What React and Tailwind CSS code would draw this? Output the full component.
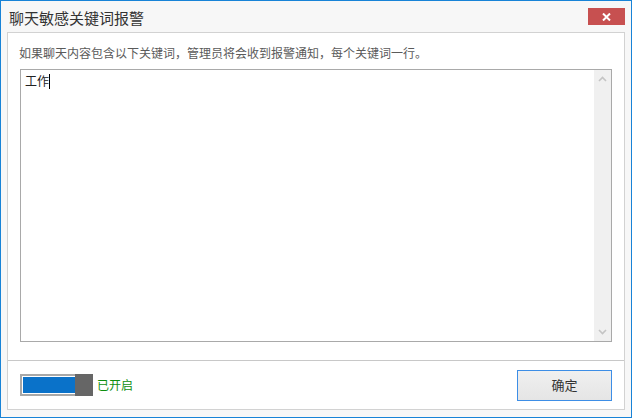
const font = { fontFamily: '"Microsoft YaHei", "Noto Sans CJK SC", sans-serif' };

function Chevron({ up }) {
  return (
    <svg width="9" height="6" viewBox="0 0 9 6" className="block">
      <path
        d={up ? 'M1 5 L4.5 1.5 L8 5' : 'M1 1 L4.5 4.5 L8 1'}
        fill="none"
        stroke="#c4c4c4"
        strokeWidth="1.6"
      />
    </svg>
  );
}

export default function App() {
  return (
    <div
      className="w-[632px] h-[418px] border border-[#1883d7] bg-[#f7f7f7] flex flex-col text-[#333]"
      style={font}
    >
      {/* title bar */}
      <div className="h-[31px] flex items-start justify-between pl-[8px] pr-[6px]">
        <div className="text-[15px] leading-[20px] mt-[7px] text-[#333]">聊天敏感关键词报警</div>
        <button className="mt-[7px] w-[37px] h-[17px] bg-[#c75050] flex items-center justify-center">
          <svg width="9" height="8" viewBox="0 0 9 8">
            <path d="M1 0.5 L8 7.5 M8 0.5 L1 7.5" stroke="#fff" strokeWidth="2" />
          </svg>
        </button>
      </div>

      {/* panel */}
      <div className="mx-[6px] mb-[7px] flex-1 border border-[#d2d2d2] bg-white flex flex-col">
        <div className="px-[12px] pt-[12px]">
          <div className="text-[12px] leading-[16px] text-[#5a5a5a] -ml-[1px]">
            如果聊天内容包含以下关键词，管理员将会收到报警通知，每个关键词一行。
          </div>
          <div className="mt-[8px] h-[273px] border border-[#a9a9a9] flex">
            <div className="flex-1 pl-[4px] pt-[2px]">
              <div className="flex items-start text-[12px] leading-[16px] text-[#222]">
                <span className="mt-[1px]">工作</span>
                <span className="w-[1px] h-[15px] bg-black mt-[2px]" />
              </div>
            </div>
            <div className="w-[17px] bg-[#f0f0f0] flex flex-col items-center justify-between py-[6px]">
              <Chevron up />
              <Chevron />
            </div>
          </div>
        </div>

        <div className="mt-[18px] h-[1px] bg-[#c8c8c8]" />

        <div className="flex-1 flex items-center justify-between px-[12px]">
          <div className="flex items-center">
            <div className="w-[55px] h-[22px] border-2 border-r-0 border-[#a8a8a8] p-[1px] pr-0 bg-white">
              <div className="h-full bg-[#0a72c9]" />
            </div>
            <div className="w-[18px] h-[22px] bg-[#666666]" />
            <span className="ml-[4px] text-[12px] leading-[16px] text-[#0f8f0f]">已开启</span>
          </div>
          <button className="w-[95px] h-[31px] border border-[#3d8ee6] bg-gradient-to-b from-[#f0f0f0] to-[#e5e5e5] text-[13px] text-[#333]" style={font}>
            确定
          </button>
        </div>
      </div>
    </div>
  );
}
